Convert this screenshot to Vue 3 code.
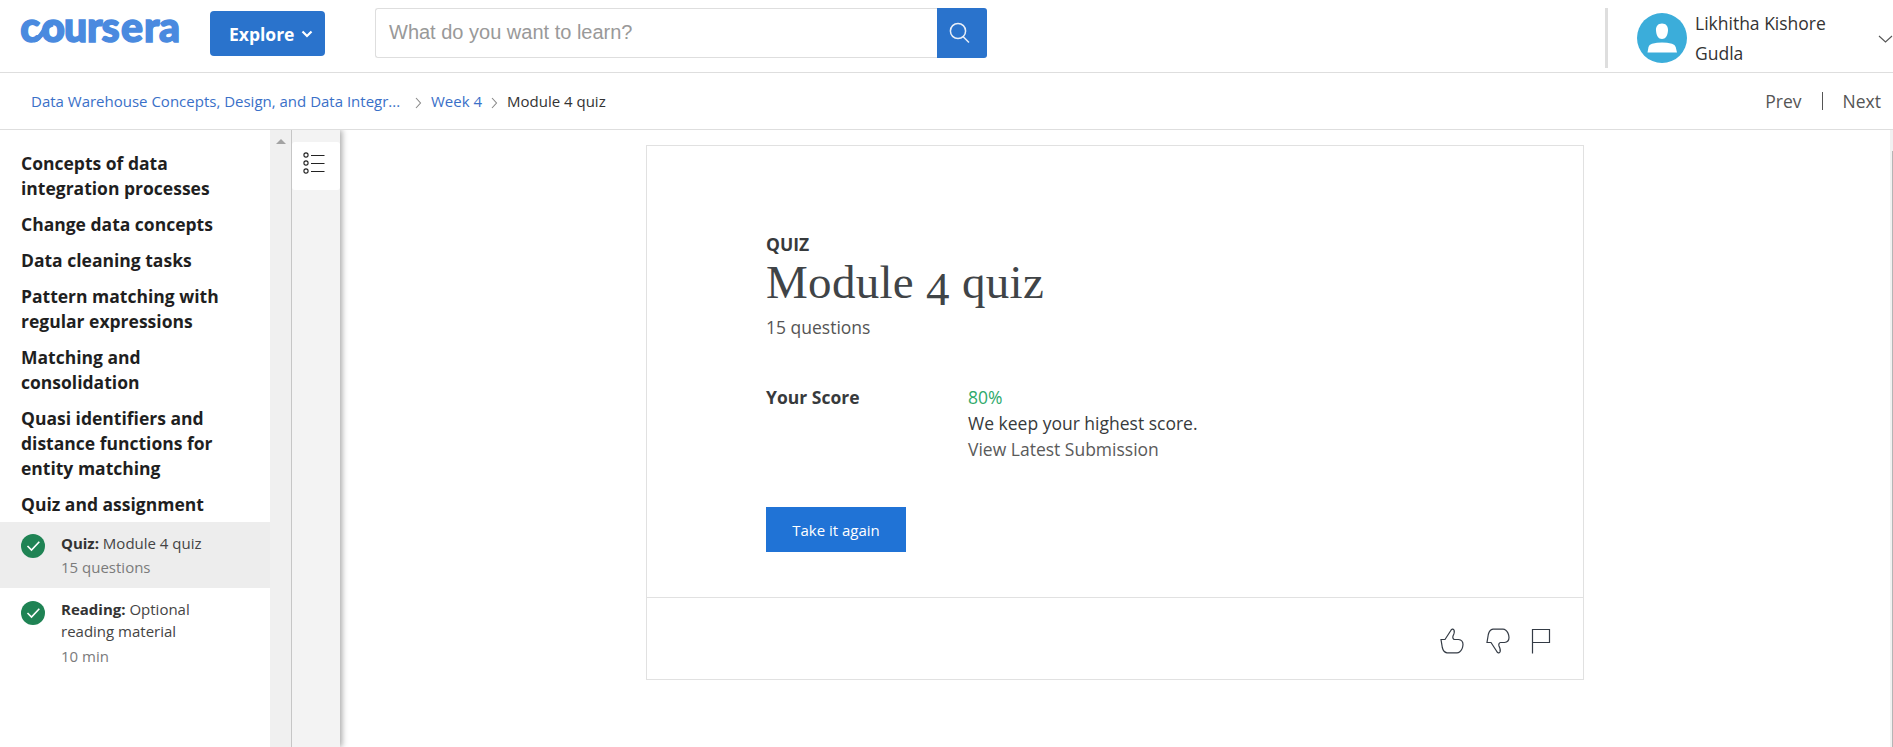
<script setup>
const lessons = [
  'Concepts of data integration processes',
  'Change data concepts',
  'Data cleaning tasks',
  'Pattern matching with regular expressions',
  'Matching and consolidation',
  'Quasi identifiers and distance functions for entity matching',
  'Quiz and assignment',
]
const items = [
  { kind: 'Quiz:', title: 'Module 4 quiz', meta: '15 questions', active: true },
  { kind: 'Reading:', title: 'Optional reading material', meta: '10 min', active: false },
]
</script>

<template>
  <div class="page">
    <header class="header">
      <svg class="logo" width="162" height="40" viewBox="0 0 162 40" role="img" aria-label="coursera">
        <text class="wordmark" y="30" x="0.3 21.2 44 67 81.5 101 124 139">coursera</text>
        <path d="M14 28 C23 26.5 23 13.5 33 12" class="link" />
      </svg>
      <button class="explore">
        <span>Explore</span>
        <svg width="12" height="8" viewBox="0 0 12 8"><path d="M1.5 1.5 L6 6 L10.5 1.5" fill="none" stroke="#fff" stroke-width="2.2" /></svg>
      </button>
      <div class="search">
        <div class="field"><span>What do you want to learn?</span></div>
        <button class="go" aria-label="Search">
          <svg width="22" height="22" viewBox="0 0 22 22" fill="none" stroke="#e9eff8" stroke-width="1.5"><circle cx="9" cy="9" r="7.6" /><path d="M14 14.5 L20 20.5" /></svg>
        </button>
      </div>
      <div class="user">
        <svg class="avatar" width="50" height="50" viewBox="0 0 50 50">
          <circle cx="25" cy="25" r="25" fill="#3badda" />
          <path d="M25 10.5 C29 10.5 31.3 13.3 31 17.5 C30.7 22.5 28.5 26 25 26 C21.5 26 19.3 22.5 19 17.5 C18.7 13.3 21 10.5 25 10.5 Z" fill="#fff" />
          <path d="M10.5 39.5 L11.5 34 Q12 31.5 15 30.8 Q25 28 35 30.8 Q38 31.5 38.7 34 L40 39.5 Z" fill="#fff" />
        </svg>
        <div class="name"><span>Likhitha Kishore Gudla</span></div>
        <svg class="caret" width="15" height="9" viewBox="0 0 15 9"><path d="M1 1 L7.5 7 L14 1" fill="none" stroke="#555" stroke-width="1.1" /></svg>
      </div>
    </header>

    <nav class="crumbs">
      <a class="course">Data Warehouse Concepts, Design, and Data Integr...</a>
      <svg class="sep first" width="7" height="12" viewBox="0 0 7 12"><path d="M1 1 L5.5 6 L1 11" fill="none" stroke="#888" stroke-width="1.1" /></svg>
      <a class="week">Week 4</a>
      <svg class="sep" width="7" height="12" viewBox="0 0 7 12"><path d="M1 1 L5.5 6 L1 11" fill="none" stroke="#888" stroke-width="1.1" /></svg>
      <span class="here">Module 4 quiz</span>
      <div class="pager"><a>Prev</a><i></i><a>Next</a></div>
    </nav>

    <div class="body">
      <aside class="sidebar">
        <div class="lessons">
          <h4 v-for="l in lessons" :key="l">{{ l }}</h4>
        </div>
        <div v-for="i in items" :key="i.title" class="item" :class="{ active: i.active }">
          <svg width="24" height="24" viewBox="0 0 24 24"><circle cx="12" cy="12" r="12" fill="#1f8354" /><path d="M6.5 12 L10.5 16 L18.3 7.7" fill="none" stroke="#fff" stroke-width="1.6" /></svg>
          <div class="text">
            <div class="title"><b>{{ i.kind }}</b> {{ i.title }}</div>
            <div class="meta">{{ i.meta }}</div>
          </div>
        </div>
      </aside>
      <div class="track"><i></i></div>
      <div class="rail">
        <div class="tab">
          <svg width="22" height="22" viewBox="0 0 22 22" fill="none" stroke="#222" stroke-width="1.1">
            <circle cx="3" cy="3" r="2.1" /><circle cx="3" cy="11" r="2.1" /><circle cx="3" cy="19" r="2.1" />
            <path d="M8 3.5 H21.5 M8 11.5 H21.5 M8 19.5 H21.5" />
          </svg>
        </div>
      </div>
      <main class="content">
        <section class="card">
          <div class="main">
            <div class="kind">QUIZ</div>
            <h1>Module <span class="low">4</span> quiz</h1>
            <div class="count">15 questions</div>
            <div class="score">
              <div class="label">Your Score</div>
              <div class="values">
                <div class="pct">80%</div>
                <div>We keep your highest score.</div>
                <a>View Latest Submission</a>
              </div>
            </div>
            <button class="again"><span>Take it again</span></button>
          </div>
          <footer class="foot">
            <svg width="24" height="26" viewBox="0 0 24 26"><path d="M1 11.5 H5 L10.5 3 C11.5 .8 13 .5 14 2 C14.8 3.8 14.3 5.5 13 8 C12.5 9.5 13 11.5 14.5 11.5 H18.5 C21.5 11.8 23 14 23 16.5 C22.8 20 21.5 22.5 19.5 24 Q18.5 24.8 17 24.8 H7 C5 24.5 3 22.5 2.3 19.5 Z" /></svg>
            <svg width="24" height="26" viewBox="0 0 24 26"><path d="M1 14.5 H5 L10.5 23 C11.5 25.2 13 25.5 14 24 C14.8 22.2 14.3 20.5 13 18 C12.5 16.5 13 14.5 14.5 14.5 H18.5 C21.5 14.2 23 12 23 9.5 C22.8 6 21.5 3.5 19.5 2 Q18.5 1.2 17 1.2 H7 C5 1.5 3 3.5 2.3 6.5 Z" /></svg>
            <svg class="flag" width="20" height="26" viewBox="0 0 20 26"><path d="M1.5 25.5 V1.5 H18.5 V14.5 H1.5" /></svg>
          </footer>
        </section>
      </main>
      <div class="page-track"><i></i></div>
    </div>
  </div>
</template>

<style>
html, body { margin: 0; overflow: hidden; background: #fff; }
</style>

<style scoped>
.page { width: 1893px; height: 747px; display: flex; flex-direction: column; overflow: hidden; font-family: "Open Sans", "Noto Sans", sans-serif; color: #373a3c; background: #fff; }
.page * { box-sizing: border-box; }
svg { display: block; flex: none; }
button { border: 0; margin: 0; padding: 0; font-family: inherit; color: #fff; }
.header { height: 73px; flex: none; display: flex; align-items: flex-start; border-bottom: 1px solid #dedede; }
.logo { margin: 12px 0 0 20px; overflow: visible; }
.wordmark { font-family: Lato, sans-serif; font-weight: 900; font-size: 41px; fill: #4a8adf; stroke: #4a8adf; stroke-width: 1.5; }
.link { fill: none; stroke: #4a8adf; stroke-width: 5; }
.explore { width: 115px; height: 45px; margin: 11px 0 0 28px; padding-left: 19px; display: flex; align-items: center; gap: 7px; background: #2a73cc; border-radius: 4px; font-size: 17.5px; font-weight: 700; }
.search { display: flex; width: 612px; height: 50px; margin: 8px 0 0 50px; }
.field { flex: 1; border: 1px solid #dedede; border-right: 0; border-radius: 3px 0 0 3px; padding-left: 13px; font: 20px/46px "Liberation Sans", Arial, sans-serif; color: #999; }
.go { width: 50px; background: #2a73cc; border-radius: 0 3px 3px 0; padding-left: 12px; }
.user { margin: 8px 0 0 auto; height: 60px; width: 288px; border-left: 3px solid #dedede; display: flex; align-items: flex-start; }
.avatar { margin: 5px 0 0 29px; }
.name { width: 165px; margin: 0 0 0 8px; font-size: 17.5px; line-height: 30px; color: #333; }
.name span { display: block; width: 145px; }
.caret { margin: 27px 0 0 18px; }
.crumbs { height: 57px; flex: none; border-bottom: 1px solid #dedede; display: flex; align-items: center; padding-left: 31px; font-size: 15px; color: #333; }
.crumbs .course, .crumbs .week { color: #3a70c8; }
.course { width: 384px; }
.sep { margin: 3px 9px 0 0; }
.week { width: 60px; }
.pager { margin: 0 12px 0 auto; display: flex; align-items: center; font-size: 17.5px; color: #555; }
.pager i { width: 1px; height: 18px; background: #555; margin: 0 20px; }
.body { flex: 1; display: flex; min-height: 0; }
.sidebar { width: 270px; flex: none; }
.lessons { height: 392px; padding: 21px 40px 0 21px; display: flex; flex-direction: column; gap: 11px; }
.lessons h4 { margin: 0; font-size: 17.5px; line-height: 25px; font-weight: 700; color: #1f1f1f; }
.item { display: flex; gap: 16px; padding: 10px 50px 9px 21px; min-height: 66px; font-size: 15px; line-height: 22px; }
.item svg { margin-top: 2px; }
.item:not(.active) svg { margin-top: 3px; }
.item.active { background: #ededed; }
.item b { font-weight: 700; color: #333; }
.title { color: #444; }
.meta { color: #7b7b7b; margin-top: 2px; }
.item:not(.active) .meta { margin-top: 3px; }
.track { width: 21px; flex: none; background: #f0f0f0; }
.track i { display: block; width: 0; margin: 9px 0 0 6px; border: 5px solid transparent; border-top: 0; border-bottom: 5px solid #a3a3a3; }
.rail { width: 49px; flex: none; border-left: 1px solid #c6c6c6; background: #f3f3f3; padding-top: 12px; box-shadow: 2px 0 6px rgba(0, 0, 0, .35); clip-path: inset(0 -12px 0 0); }
.tab { height: 48px; background: #fff; border-radius: 3px; padding: 10px 0 0 11px; }
.content { flex: 1; padding: 15px 0 0 306px; }
.card { width: 938px; height: 535px; border: 1px solid #e1e1e1; display: flex; flex-direction: column; }
.main { height: 452px; flex: none; border-bottom: 1px solid #e1e1e1; padding: 85px 0 0 119px; font-size: 17.5px; line-height: 26px; }
.kind { font-weight: 700; font-size: 17.5px; color: #373a3c; }
h1 { margin: -2px 0 0; height: 59px; font: 400 47px/55px "Liberation Serif", serif; letter-spacing: .3px; color: #404447; white-space: nowrap; }
.low { vertical-align: -7px; line-height: 1; }
.count { color: #555; }
.score { display: flex; margin-top: 44px; }
.label { width: 202px; font-weight: 700; }
.pct { color: #2fa96b; }
.values a { color: #5a5a5a; }
.again { display: block; width: 140px; height: 45px; margin-top: 45px; background: #2073d6; font-size: 15px; font-weight: 500; }
.foot { flex: 1; display: flex; padding: 30px 32px 0 0; justify-content: flex-end; gap: 22px; }
.foot svg { fill: none; stroke: #343b45; stroke-width: 1.2; }
.foot .flag { margin-left: -1px; }
.page-track { width: 3px; flex: none; background: #f1f1f1; padding: 21px 0 0 2px; }
.page-track i { display: block; height: 100%; background: #b5b5b5; }
</style>
